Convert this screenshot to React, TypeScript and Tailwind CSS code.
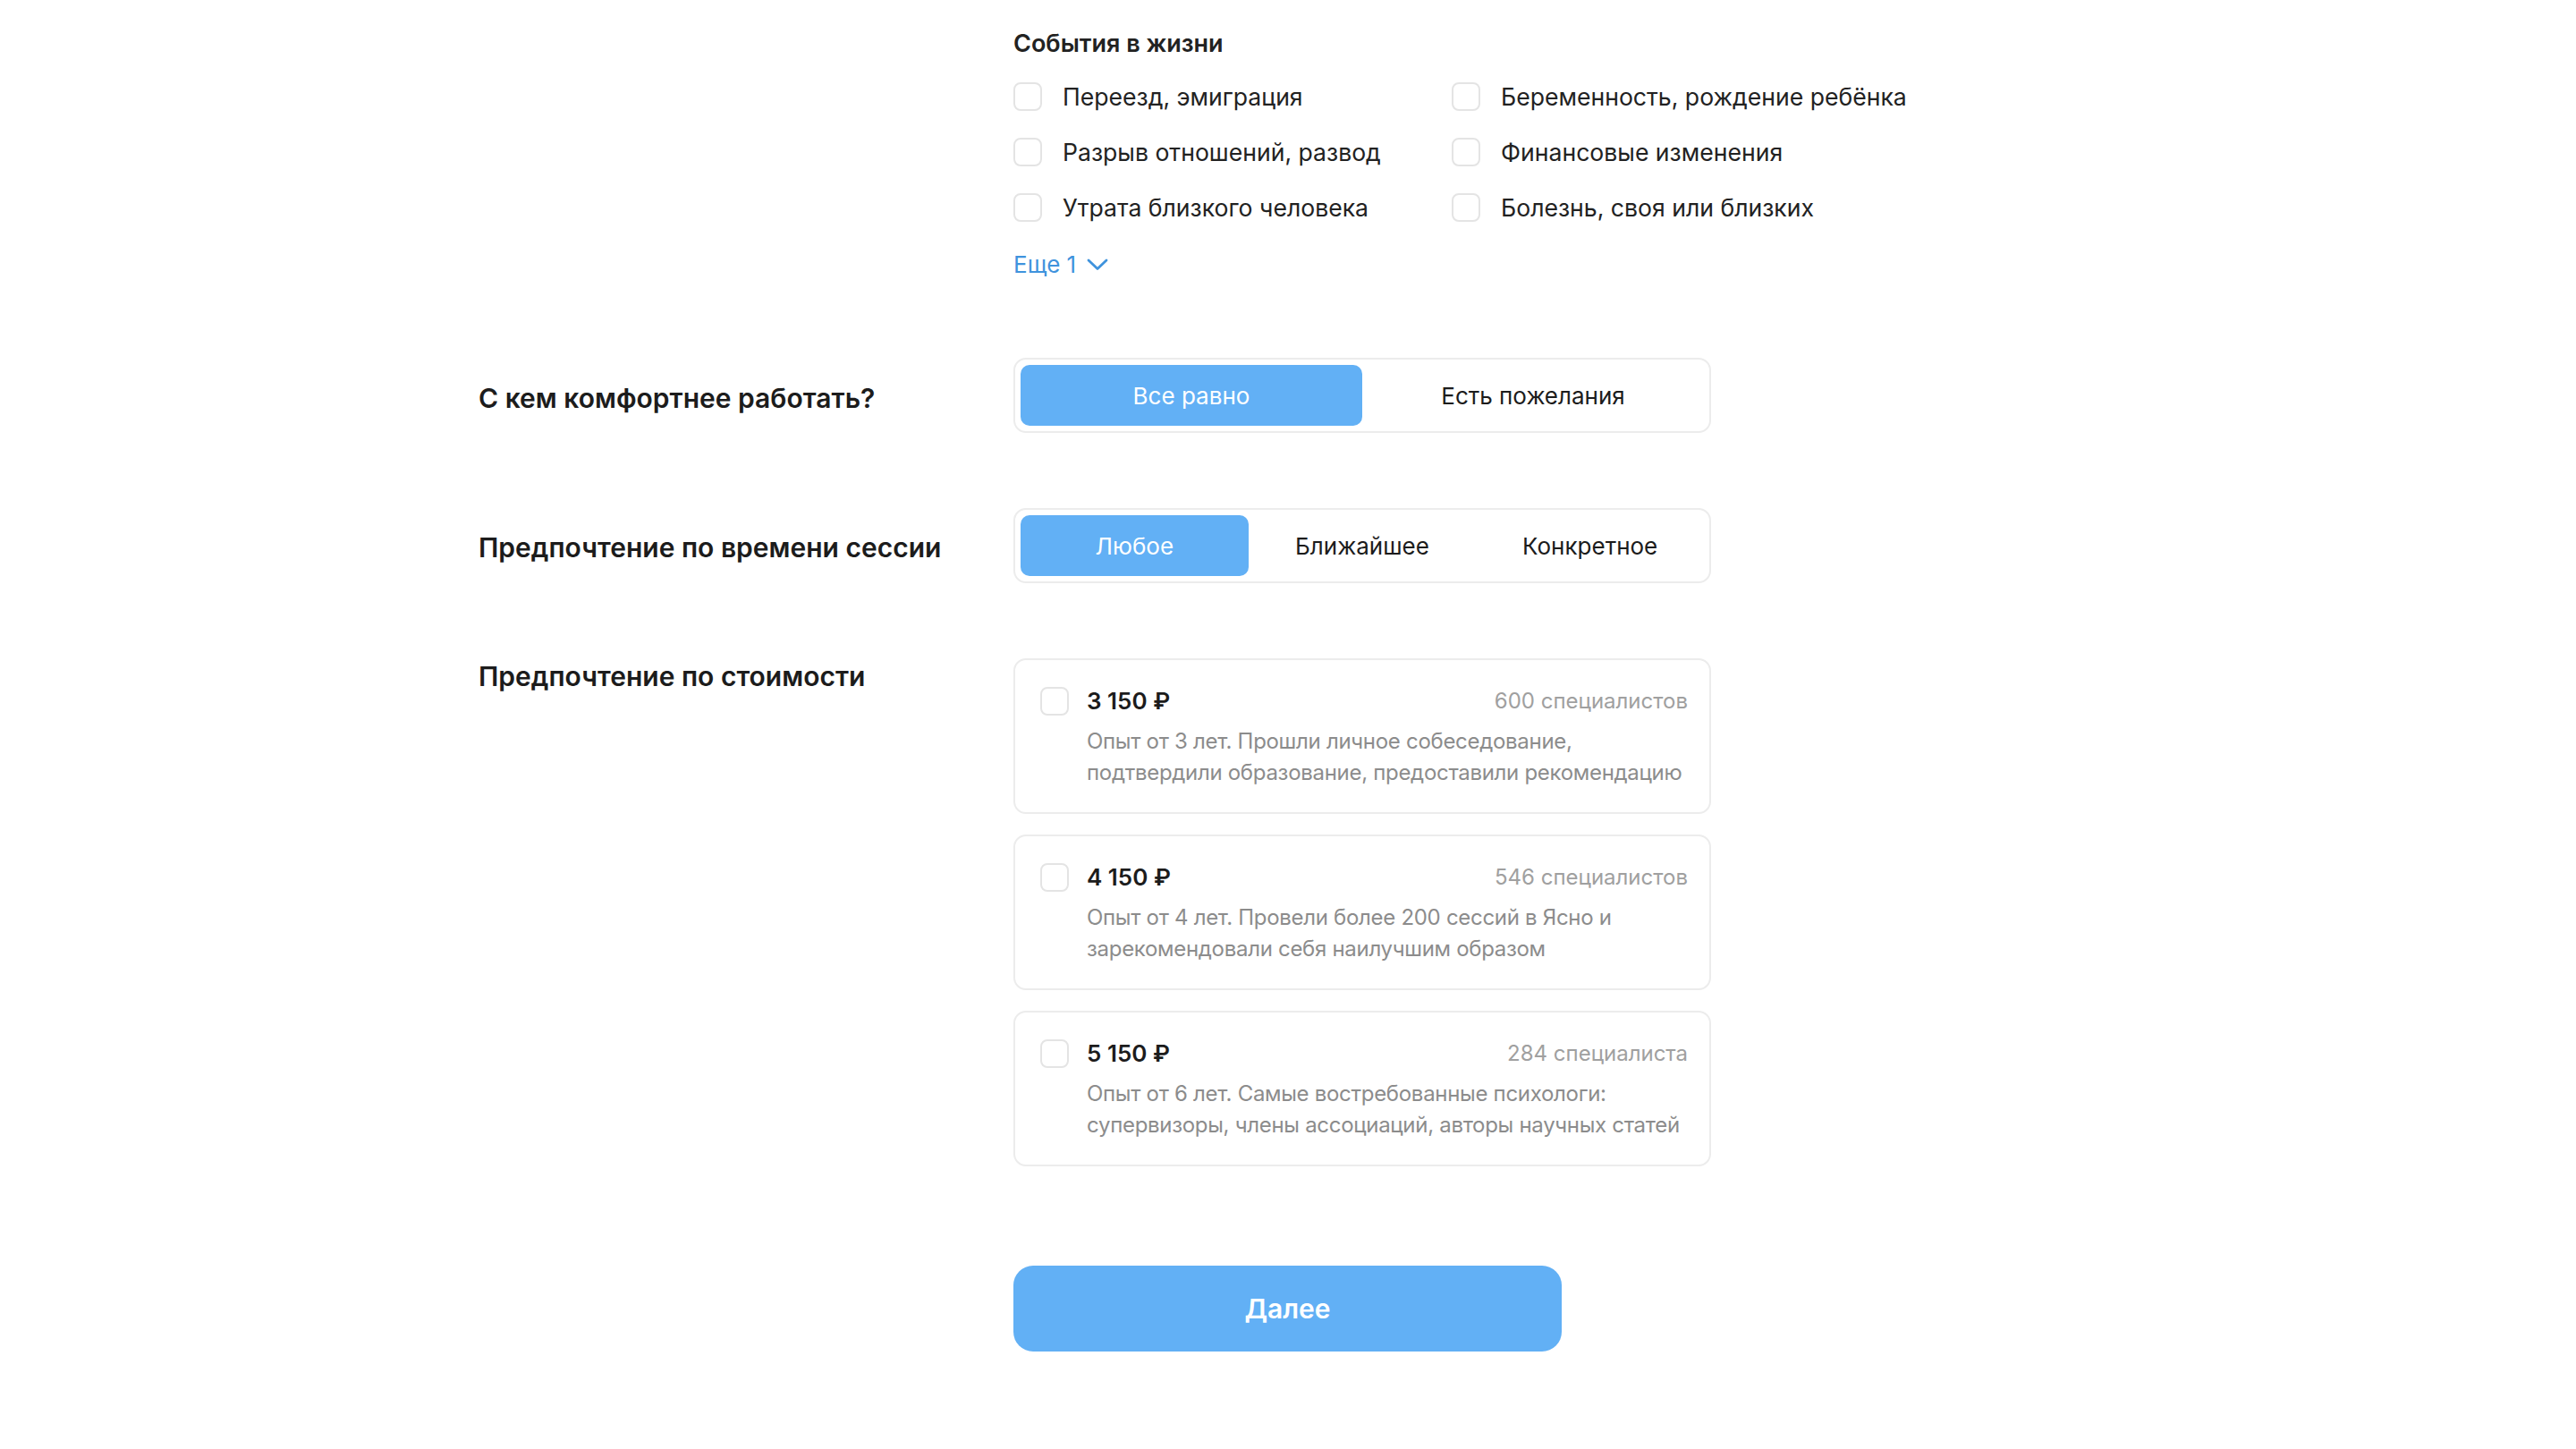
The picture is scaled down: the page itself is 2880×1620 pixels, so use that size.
import React from "react";

const font = { fontFamily: "Inter, 'Noto Sans', sans-serif" };

function Box() {
  return <div className="w-[32px] h-[32px] shrink-0 rounded-[8px] border-2 border-[#e4e4e4] bg-white" />;
}

const events = [
  ["Переезд, эмиграция", "Беременность, рождение ребёнка"],
  ["Разрыв отношений, развод", "Финансовые изменения"],
  ["Утрата близкого человека", "Болезнь, своя или близких"],
];

const prices = [
  {
    price: "3 150 ₽",
    count: "600 специалистов",
    lines: ["Опыт от 3 лет. Прошли личное собеседование,", "подтвердили образование, предоставили рекомендацию"],
  },
  {
    price: "4 150 ₽",
    count: "546 специалистов",
    lines: ["Опыт от 4 лет. Провели более 200 сессий в Ясно и", "зарекомендовали себя наилучшим образом"],
  },
  {
    price: "5 150 ₽",
    count: "284 специалиста",
    lines: ["Опыт от 6 лет. Самые востребованные психологи:", "супервизоры, члены ассоциаций, авторы научных статей"],
  },
];

function Segmented({ items, active }: { items: string[]; active: number }) {
  return (
    <div className="w-[780px] h-[84px] rounded-[14px] border-2 border-[#ececec] p-[6px] flex">
      {items.map((t, i) => (
        <div
          key={t}
          className={
            i === active
              ? "flex-1 h-[68px] rounded-[10px] bg-[#62b0f5] text-white flex items-center justify-center text-[26px]"
              : "flex-1 h-[68px] rounded-[10px] text-[#1c1c1c] flex items-center justify-center text-[26px]"
          }
        >
          {t}
        </div>
      ))}
    </div>
  );
}

export default function App() {
  return (
    <div className="min-h-screen w-full bg-white" style={font}>
      <div className="w-[1810px] mx-auto grid grid-cols-[598px_1fr]">
        {/* Life events */}
        <div />
        <div className="pt-[31px]">
          <div className="text-[27px] leading-[36px] font-semibold text-[#222]">События в жизни</div>
          <div className="mt-[25px] grid grid-cols-[490px_1fr] gap-y-[30px]">
            {events.flat().map((t) => (
              <div key={t} className="flex items-center gap-[23px] h-[32px]">
                <Box />
                <span className="text-[26.6px] leading-[36px] text-[#222] whitespace-nowrap">{t}</span>
              </div>
            ))}
          </div>
          <div className="mt-[30px] flex items-center gap-[12px] text-[#3f93dd] text-[26px] leading-[36px]">
            <span>Еще 1</span>
            <svg width="24" height="14" viewBox="0 0 24 14" fill="none">
              <path d="M2 2 L12 11.5 L22 2" stroke="#3f93dd" strokeWidth="2.8" strokeLinecap="round" strokeLinejoin="round" />
            </svg>
          </div>
        </div>

        {/* With whom */}
        <div className="mt-[86px] pt-[6px] flex items-center text-[30px] font-semibold text-[#1c1c1c]">С кем комфортнее работать?</div>
        <div className="mt-[86px]">
          <Segmented items={["Все равно", "Есть пожелания"]} active={0} />
        </div>

        {/* Session time */}
        <div className="mt-[84px] pt-[5px] flex items-center text-[30px] font-semibold text-[#1c1c1c]">Предпочтение по времени сессии</div>
        <div className="mt-[84px]">
          <Segmented items={["Любое", "Ближайшее", "Конкретное"]} active={0} />
        </div>

        {/* Cost */}
        <div className="mt-[84px] text-[30px] leading-[40px] font-semibold text-[#1c1c1c]">Предпочтение по стоимости</div>
        <div className="mt-[84px] w-[780px] flex flex-col gap-[23px]">
          {prices.map((p) => (
            <div key={p.price} className="rounded-[14px] border-2 border-[#ececec] pl-[28px] pr-[24px] pt-[26px] pb-[27px]">
              <div className="flex items-center">
                <Box />
                <span className="ml-[20px] text-[26px] font-semibold text-[#1c1c1c]">{p.price}</span>
                <span className="ml-auto text-[24px] text-[#a0a0a0]">{p.count}</span>
              </div>
              <div className="ml-[52px] mt-[8px] text-[24px] leading-[35px] tracking-[-0.3px] text-[#8c8c8c] whitespace-nowrap">
                {p.lines.map((l) => (
                  <div key={l}>{l}</div>
                ))}
              </div>
            </div>
          ))}
        </div>

        {/* Button */}
        <div />
        <div className="mt-[111px]">
          <button className="w-[613px] h-[96px] rounded-[22px] bg-[#62b0f5] text-white text-[30px] font-semibold">
            Далее
          </button>
        </div>
      </div>
    </div>
  );
}
